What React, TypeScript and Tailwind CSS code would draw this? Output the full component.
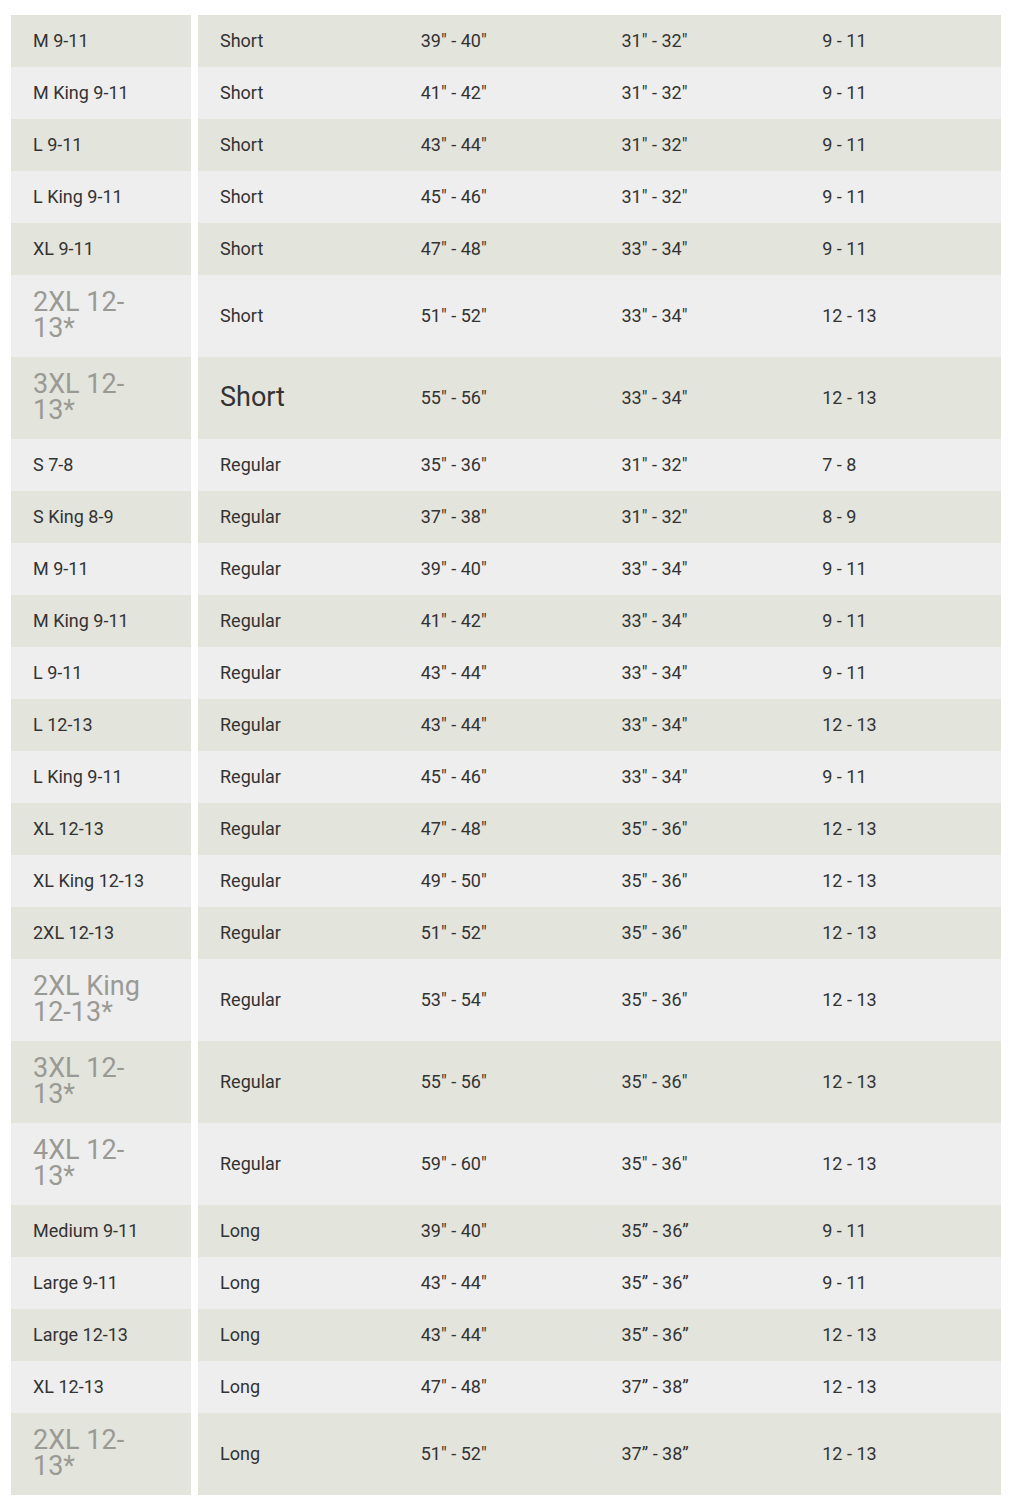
type Row = {
  size: string;
  fit: string;
  chest: string;
  sleeve: string;
  shoe: string;
  tall?: boolean;
  bigFit?: boolean;
};

const rows: Row[] = [
  { size: "M 9-11", fit: "Short", chest: '39" - 40"', sleeve: '31" - 32"', shoe: "9 - 11" },
  { size: "M King 9-11", fit: "Short", chest: '41" - 42"', sleeve: '31" - 32"', shoe: "9 - 11" },
  { size: "L 9-11", fit: "Short", chest: '43" - 44"', sleeve: '31" - 32"', shoe: "9 - 11" },
  { size: "L King 9-11", fit: "Short", chest: '45" - 46"', sleeve: '31" - 32"', shoe: "9 - 11" },
  { size: "XL 9-11", fit: "Short", chest: '47" - 48"', sleeve: '33" - 34"', shoe: "9 - 11" },
  { size: "2XL 12-13*", fit: "Short", chest: '51" - 52"', sleeve: '33" - 34"', shoe: "12 - 13", tall: true },
  { size: "3XL 12-13*", fit: "Short", chest: '55" - 56"', sleeve: '33" - 34"', shoe: "12 - 13", tall: true, bigFit: true },
  { size: "S 7-8", fit: "Regular", chest: '35" - 36"', sleeve: '31" - 32"', shoe: "7 - 8" },
  { size: "S King 8-9", fit: "Regular", chest: '37" - 38"', sleeve: '31" - 32"', shoe: "8 - 9" },
  { size: "M 9-11", fit: "Regular", chest: '39" - 40"', sleeve: '33" - 34"', shoe: "9 - 11" },
  { size: "M King 9-11", fit: "Regular", chest: '41" - 42"', sleeve: '33" - 34"', shoe: "9 - 11" },
  { size: "L 9-11", fit: "Regular", chest: '43" - 44"', sleeve: '33" - 34"', shoe: "9 - 11" },
  { size: "L 12-13", fit: "Regular", chest: '43" - 44"', sleeve: '33" - 34"', shoe: "12 - 13" },
  { size: "L King 9-11", fit: "Regular", chest: '45" - 46"', sleeve: '33" - 34"', shoe: "9 - 11" },
  { size: "XL 12-13", fit: "Regular", chest: '47" - 48"', sleeve: '35" - 36"', shoe: "12 - 13" },
  { size: "XL King 12-13", fit: "Regular", chest: '49" - 50"', sleeve: '35" - 36"', shoe: "12 - 13" },
  { size: "2XL 12-13", fit: "Regular", chest: '51" - 52"', sleeve: '35" - 36"', shoe: "12 - 13" },
  { size: "2XL King 12-13*", fit: "Regular", chest: '53" - 54"', sleeve: '35" - 36"', shoe: "12 - 13", tall: true },
  { size: "3XL 12-13*", fit: "Regular", chest: '55" - 56"', sleeve: '35" - 36"', shoe: "12 - 13", tall: true },
  { size: "4XL 12-13*", fit: "Regular", chest: '59" - 60"', sleeve: '35" - 36"', shoe: "12 - 13", tall: true },
  { size: "Medium 9-11", fit: "Long", chest: '39" - 40"', sleeve: "35\u201d - 36\u201d", shoe: "9 - 11" },
  { size: "Large 9-11", fit: "Long", chest: '43" - 44"', sleeve: "35\u201d - 36\u201d", shoe: "9 - 11" },
  { size: "Large 12-13", fit: "Long", chest: '43" - 44"', sleeve: "35\u201d - 36\u201d", shoe: "12 - 13" },
  { size: "XL 12-13", fit: "Long", chest: '47" - 48"', sleeve: "37\u201d - 38\u201d", shoe: "12 - 13" },
  { size: "2XL 12-13*", fit: "Long", chest: '51" - 52"', sleeve: "37\u201d - 38\u201d", shoe: "12 - 13", tall: true },
];

const SizeRow = ({ row, index }: { row: Row; index: number }) => {
  const bg = index % 2 === 0 ? "bg-[#e3e4dc]" : "bg-[#eeeeee]";
  const height = row.tall ? "h-[82px]" : "h-[52px]";

  return (
    <div className={`flex ${height}`}>
      <div className={`w-[180px] shrink-0 flex items-center pl-[22px] pr-[36px] pb-[2px] ${bg}`}>
        {row.tall ? (
          <span className="text-[27px] leading-[26px] text-[#9a9a94]">{row.size}</span>
        ) : (
          <span className="text-[18px] text-[#333]">{row.size}</span>
        )}
      </div>
      <div className="w-[7px] shrink-0 bg-white" />
      <div className={`flex-1 grid grid-cols-4 items-center pb-[2px] text-[18px] text-[#333] ${bg}`}>
        <span className={`pl-[22px] ${row.bigFit ? "text-[27px]" : ""}`}>{row.fit}</span>
        <span className="pl-[22px]">{row.chest}</span>
        <span className="pl-[22px]">{row.sleeve}</span>
        <span className="pl-[22px]">{row.shoe}</span>
      </div>
    </div>
  );
};

export default function App() {
  return (
    <div className="bg-white min-h-[1512px] pt-[15px] pl-[11px] pr-[17px] font-['Roboto',sans-serif]">
      <div className="flex flex-col">
        {rows.map((row, i) => (
          <SizeRow key={i} row={row} index={i} />
        ))}
      </div>
    </div>
  );
}
